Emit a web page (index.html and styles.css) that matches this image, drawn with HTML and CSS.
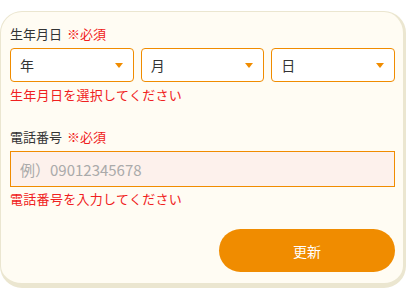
FILE: index.html
```html
<!DOCTYPE html>
<html>
<head>
	<meta charset="utf-8">
	<meta name="viewport" content="width=device-width, initial-scale=1">
	<title>会員情報</title>
	<link rel="stylesheet" href="styles.css">
</head>
<body>
	<div class="card">
		<div class="field">
			<div class="label">生年月日 <span class="req">※必須</span></div>
			<div class="selects">
				<div class="select"><span>年</span><i class="arrow"></i></div>
				<div class="select"><span>月</span><i class="arrow"></i></div>
				<div class="select"><span>日</span><i class="arrow"></i></div>
			</div>
			<div class="error">生年月日を選択してください</div>
		</div>

		<div class="field tel">
			<div class="label">電話番号 <span class="req">※必須</span></div>
			<input type="text" class="input" placeholder="例）09012345678">
			<div class="error">電話番号を入力してください</div>
		</div>

		<div class="actions">
			<button class="btn">更新</button>
		</div>
	</div>
</body>
</html>
```
FILE: styles.css
```css
* {
	margin: 0;
	padding: 0;
	box-sizing: border-box;
}

body {
	background: #fff;
	font-family: "Noto Sans CJK JP", "Noto Sans", sans-serif;
	color: #333;
}

.card {
	margin-top: 11px;
	width: 406px;
	background: #fffcf3;
	border: 1px solid #ebe6d0;
	border-right-width: 3px;
	border-bottom-width: 5px;
	border-radius: 22px;
	padding: 13px 8px 11px 9px;
}

.label {
	font-size: 13px;
	line-height: 18px;
	color: #333;
}

.label .req {
	color: #f02020;
	margin-left: 2px;
}

.selects {
	margin-top: 5px;
	display: flex;
	gap: 7px;
}

.select {
	flex: 1;
	height: 34px;
	border: 1.5px solid #f08c00;
	border-radius: 4px;
	background: #fff;
	display: flex;
	align-items: center;
	justify-content: space-between;
	padding: 0 10px 0 9px;
	font-size: 14px;
	color: #333;
}

.select .arrow {
	width: 0;
	height: 0;
	border-left: 4px solid transparent;
	border-right: 4px solid transparent;
	border-top: 5px solid #f08c00;
}

.error {
	margin-top: 4px;
	font-size: 13px;
	line-height: 18px;
	letter-spacing: 0.3px;
	color: #f02020;
}

.tel {
	margin-top: 24px;
}

.input {
	display: block;
	margin-top: 5px;
	width: 100%;
	height: 36px;
	border: 1px solid #f08c00;
	background: #fdf1ec;
	padding: 0 9px;
	font-family: inherit;
	font-size: 15px;
	color: #333;
	outline: none;
}

.input::placeholder {
	color: #aaa;
}

.tel .error {
	margin-top: 3px;
}

.actions {
	margin-top: 21px;
	display: flex;
	justify-content: flex-end;
}

.btn {
	width: 176px;
	height: 43px;
	border: none;
	border-radius: 22px;
	background: #f08c00;
	color: #fff;
	font-family: inherit;
	font-size: 14px;
	cursor: pointer;
}
```
